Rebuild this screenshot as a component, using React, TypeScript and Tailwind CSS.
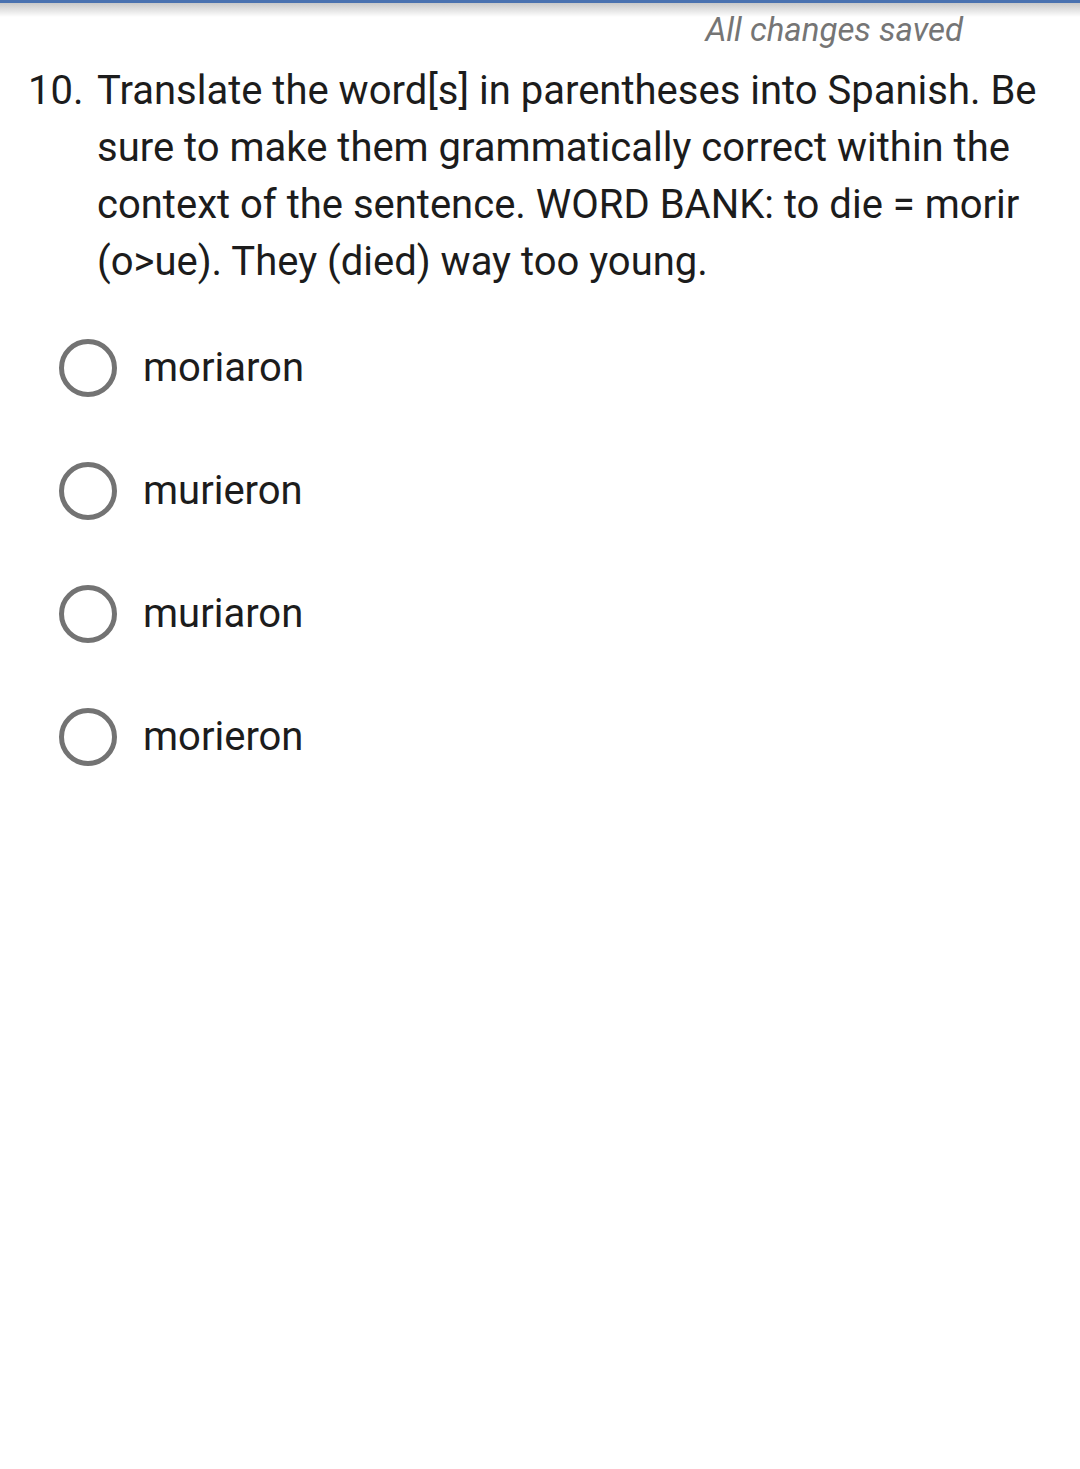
export default function App() {
  const options = ["moriaron", "murieron", "muriaron", "morieron"]

  return (
    <div className="min-h-[1469px] w-[1080px] bg-white font-['Roboto',sans-serif] text-[#1c1c1c]">
      {/* Top bar edge */}
      <div className="h-[3px] bg-[#4a72b0]" />
      <div className="h-[14px] bg-gradient-to-b from-[#c8c8c8] to-white" />

      {/* Save status */}
      <div className="flex justify-end pr-[117px] -mt-[5px]">
        <span className="text-[33px] italic leading-[36px] text-[#757575]">All changes saved</span>
      </div>

      {/* Question */}
      <div className="flex pl-[28px] pr-[30px] pt-[14px] text-[40px] leading-[57px]">
        <span className="w-[69px] shrink-0">10.</span>
        <p>
          Translate the word[s] in parentheses into Spanish. Be sure to make them grammatically correct within the
          context of the sentence. WORD BANK: to die = morir (o&gt;ue). They (died) way too young.
        </p>
      </div>

      {/* Options */}
      <div className="mt-[49px] flex flex-col gap-[65px] pl-[59px]">
        {options.map((o) => (
          <label key={o} className="flex items-center gap-[26px]">
            <span className="h-[58px] w-[58px] rounded-full border-[5px] border-[#737373]" />
            <span className="text-[40px] leading-[58px]">{o}</span>
          </label>
        ))}
      </div>
    </div>
  )
}
